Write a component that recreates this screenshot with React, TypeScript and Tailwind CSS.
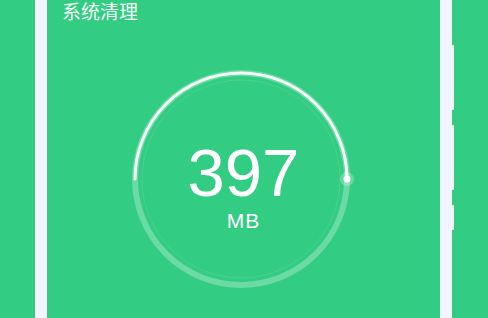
import React from 'react';

const SANS = { fontFamily: '"Liberation Sans", Arial, "Noto Sans CJK SC", sans-serif' };

function Gauge() {
  const c = 115;
  const r = 106;
  return (
    <div className="relative h-[230px] w-[230px]">
      <svg width="230" height="230" viewBox="0 0 230 230" className="absolute inset-0">
        <circle cx={c} cy={c} r={r} fill="none" stroke="white" strokeOpacity="0.28" strokeWidth="6" />
        <circle cx={c} cy={c} r={99} fill="none" stroke="white" strokeOpacity="0.1" strokeWidth="1" />
        <path
          d={`M ${c - r} ${c} A ${r} ${r} 0 0 1 ${c + r} ${c}`}
          fill="none"
          stroke="white"
          strokeOpacity="0.92"
          strokeWidth="3"
          strokeLinecap="round"
        />
        <circle cx={c + r} cy={c} r="7" fill="white" fillOpacity="0.25" />
        <circle cx={c + r} cy={c} r="3.5" fill="white" />
      </svg>
      <div className="absolute inset-0 flex flex-col items-center pt-[76px] pl-[5px] text-white" style={SANS}>
        <span className="text-[67px] leading-[66px]">397</span>
        <span className="mt-[3px] text-[21px] leading-[24px] tracking-[1px]">MB</span>
      </div>
    </div>
  );
}

export default function App() {
  return (
    <div className="flex h-[318px] w-[488px] overflow-hidden bg-[#32cc82]" style={SANS}>
      <div className="w-[35px] shrink-0" />
      <div className="w-[12px] shrink-0 bg-[#f3f5fe]" />
      <div className="flex w-[393px] shrink-0 flex-col">
        <div className="pl-[15px] pt-[1px] text-[19px] leading-[24px] text-[#f2fbf6]">系统清理</div>
        <div className="ml-[79px] mt-[39px]">
          <Gauge />
        </div>
      </div>
      <div className="flex shrink-0">
        <div className="w-[12px] bg-[#f3f5fe]" />
        <div className="flex w-[2px] flex-col">
          <div className="mt-[45px] h-[65px] rounded-r-[1px] bg-[#f3f5fe]" />
          <div className="mt-[15px] h-[65px] rounded-r-[1px] bg-[#f3f5fe]" />
          <div className="mt-[15px] h-[25px] rounded-r-[1px] bg-[#f3f5fe]" />
        </div>
      </div>
      <div className="flex-1" />
    </div>
  );
}
